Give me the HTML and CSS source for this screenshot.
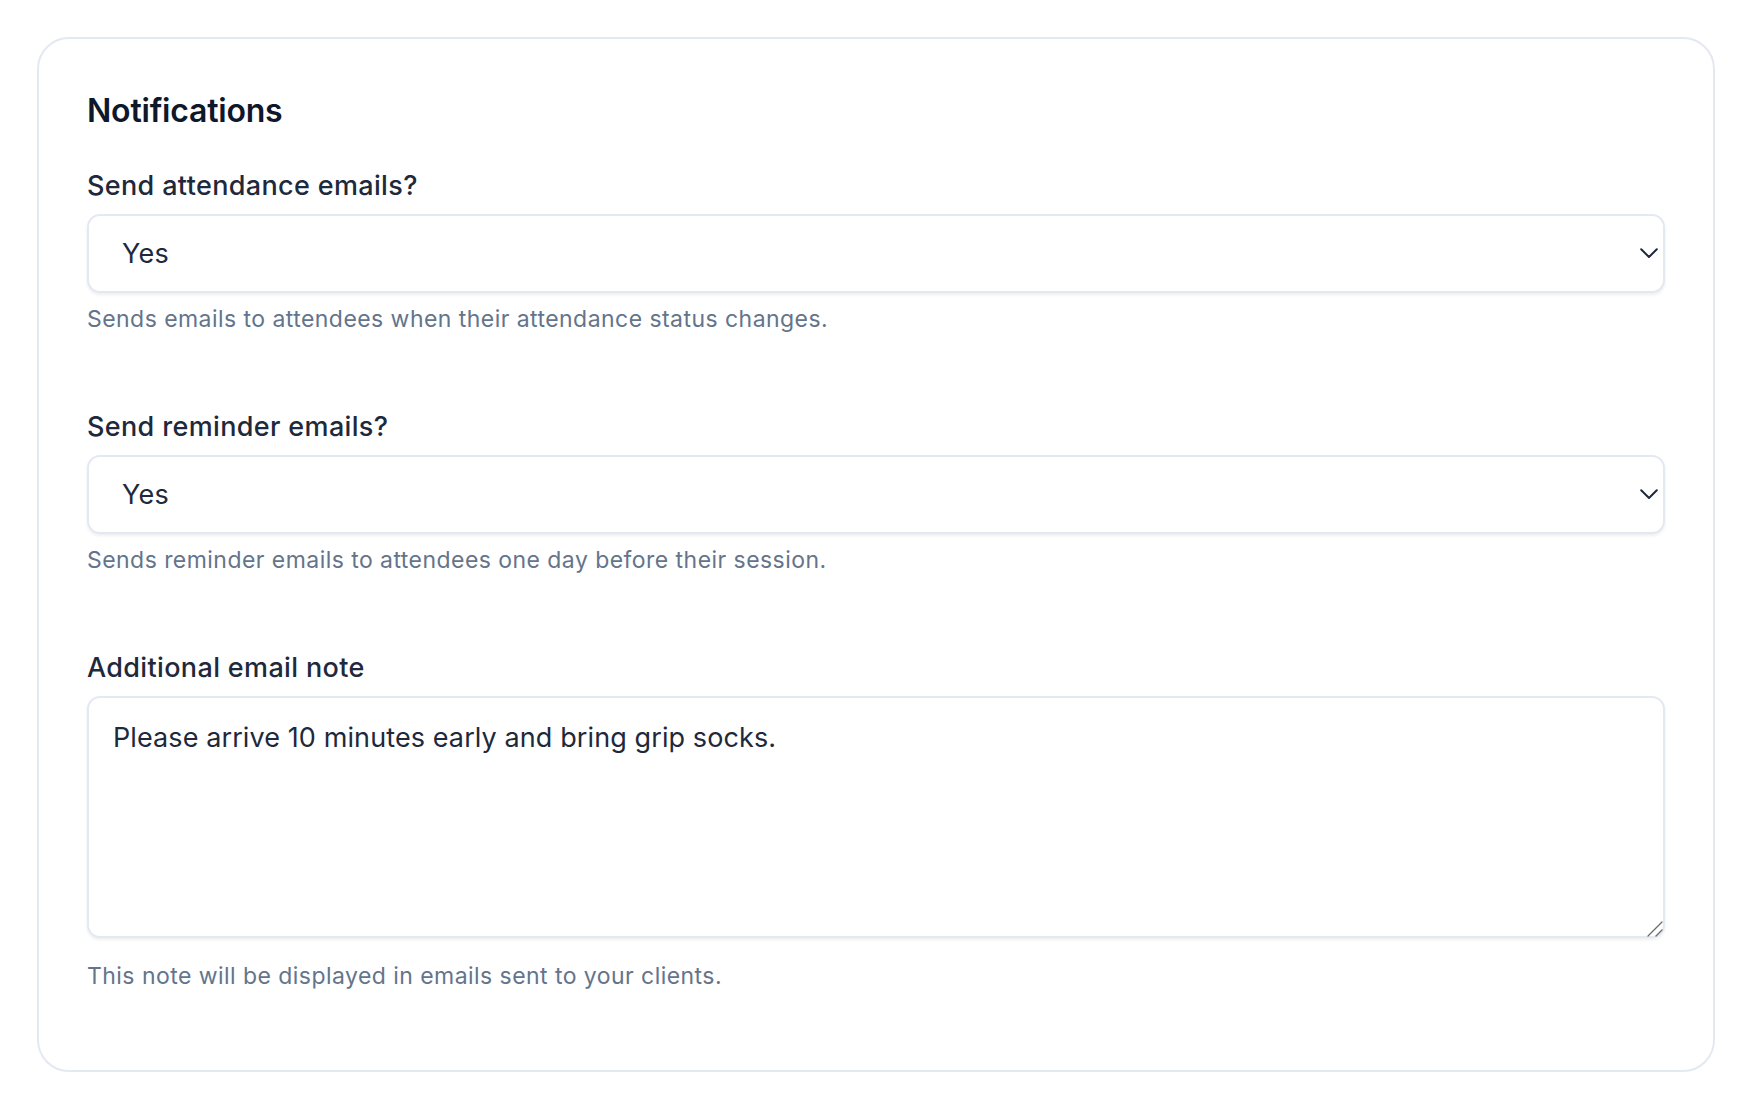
FILE: index.html
```html
<!DOCTYPE html>
<html lang="en">
<head>
<meta charset="utf-8">
<title>Notifications</title>
<link rel="stylesheet" href="styles.css">
</head>
<body>
<main class="page">
  <section class="card">
    <h2 class="card-title">Notifications</h2>
    <div class="fields">
      <div class="field">
        <label class="field-label" for="attendance">Send attendance emails?</label>
        <div class="select-wrap">
          <select id="attendance" class="select">
            <option selected>Yes</option>
            <option>No</option>
          </select>
          <svg class="chevron" width="18" height="11" viewBox="0 0 18 11" aria-hidden="true">
            <path d="M1.2 1.2 L9 9 L16.8 1.2" fill="none" stroke="#1e293b" stroke-width="2" stroke-linecap="round" stroke-linejoin="round"/>
          </svg>
        </div>
        <p class="field-help">Sends emails to attendees when their attendance status changes.</p>
      </div>
      <div class="field">
        <label class="field-label" for="reminder">Send reminder emails?</label>
        <div class="select-wrap">
          <select id="reminder" class="select">
            <option selected>Yes</option>
            <option>No</option>
          </select>
          <svg class="chevron" width="18" height="11" viewBox="0 0 18 11" aria-hidden="true">
            <path d="M1.2 1.2 L9 9 L16.8 1.2" fill="none" stroke="#1e293b" stroke-width="2" stroke-linecap="round" stroke-linejoin="round"/>
          </svg>
        </div>
        <p class="field-help">Sends reminder emails to attendees one day before their session.</p>
      </div>
      <div class="field">
        <label class="field-label" for="note">Additional email note</label>
        <div class="textarea-wrap">
          <textarea id="note" class="textarea">Please arrive 10 minutes early and bring grip socks.</textarea>
          <svg class="resizer" width="16" height="16" viewBox="0 0 16 16" aria-hidden="true">
            <path d="M1 15 L15 1 M9 15 L15 9" fill="none" stroke="#6b6b6b" stroke-width="1.3" stroke-linecap="round"/>
          </svg>
        </div>
        <p class="field-help field-help-area">This note will be displayed in emails sent to your clients.</p>
      </div>
    </div>
  </section>
</main>
</body>
</html>
```

FILE: styles.css
```css
* {
  box-sizing: border-box;
}

html, body {
  margin: 0;
  padding: 0;
  background: #ffffff;
}

body {
  font-family: Inter, "Noto Sans", "Liberation Sans", sans-serif;
  color: #1e293b;
}

.page {
  padding: 37px;
}

.card {
  border: 2px solid #e4e9f1;
  border-radius: 32px;
  padding: 48px 48px 78px;
  background: #ffffff;
}

.card-title {
  margin: 0 0 31px;
  font-size: 32px;
  line-height: 48px;
  font-weight: 600;
  letter-spacing: -0.2px;
  color: #0f172a;
}

.fields {
  display: flex;
  flex-direction: column;
  gap: 72px;
}

.field {
  display: flex;
  flex-direction: column;
}

.field-label {
  font-size: 27px;
  line-height: 40px;
  font-weight: 500;
  letter-spacing: 0.35px;
  color: #1e293b;
  margin-bottom: 8px;
}

.select-wrap,
.textarea-wrap {
  position: relative;
}

.select {
  display: block;
  width: 100%;
  height: 79px;
  -webkit-appearance: none;
  appearance: none;
  border: 2px solid #e4e9f1;
  border-radius: 13px;
  background: #ffffff;
  padding: 0 48px 0 33px;
  font-family: Inter, "Noto Sans", "Liberation Sans", sans-serif;
  font-size: 27px;
  font-weight: 400;
  letter-spacing: 0.2px;
  color: #1e293b;
  box-shadow: 0 2px 3px rgba(15, 23, 42, 0.07);
  outline: none;
}

.chevron {
  position: absolute;
  right: 7px;
  top: 34px;
  pointer-events: none;
}

.textarea {
  display: block;
  width: 100%;
  height: 242px;
  border: 2px solid #e4e9f1;
  border-radius: 13px;
  background: #ffffff;
  padding: 20px 24px;
  margin: 0;
  font-family: Inter, "Noto Sans", "Liberation Sans", sans-serif;
  font-size: 27px;
  line-height: 40px;
  font-weight: 400;
  letter-spacing: 0.1px;
  color: #1e293b;
  box-shadow: 0 2px 3px rgba(15, 23, 42, 0.07);
  resize: none;
  outline: none;
}

.resizer {
  position: absolute;
  right: 2px;
  bottom: 1px;
  pointer-events: none;
}

.field-help {
  margin: 10px 0 0;
  font-size: 23px;
  line-height: 32px;
  letter-spacing: 0.45px;
  color: #64748b;
}

.field-help-area {
  margin-top: 22px;
}
```
